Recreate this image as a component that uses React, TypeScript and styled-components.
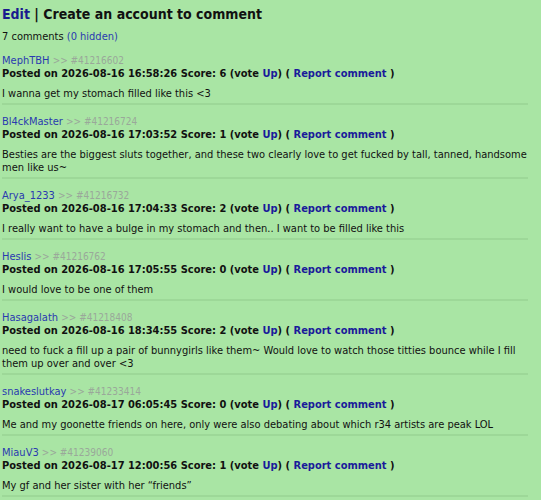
import React from "react";
import styled, { createGlobalStyle } from "styled-components";

const Global = createGlobalStyle`
  html, body { margin: 0; padding: 0; background: #a9e5a4; }
  body { font-family: "DejaVu Sans Condensed", "DejaVu Sans", sans-serif; font-stretch: condensed; color: #111; }
`;

const Page = styled.div`
  padding: 4px 13px 0 2px;
`;

const Heading = styled.h2`
  margin: 0;
  font-size: 14px;
  line-height: 20px;
  font-weight: bold;
  color: #111;
`;

const HeadLink = styled.a`
  color: #1a1a8e;
  text-decoration: none;
`;

const Count = styled.div`
  margin-top: 6px;
  font-size: 11px;
  line-height: 13px;
`;

const Hidden = styled.a`
  color: #2a3ab0;
  text-decoration: none;
`;

const List = styled.div`
  margin-top: 12px;
`;

const Comment = styled.div`
  padding-bottom: 3px;
  border-bottom: 2px solid #9dd898;
  & + & {
    padding-top: 11px;
  }
`;

const Header = styled.div`
  font-size: 11px;
  line-height: 12px;
`;

const User = styled.a`
  color: #2a3ab0;
  text-decoration: none;
`;

const Ref = styled.span`
  color: #9aa89a;
  font-size: 10px;
`;

const Posted = styled.div`
  font-size: 11px;
  line-height: 13px;
  font-weight: bold;
`;

const Link = styled.a`
  color: #1a1a9a;
  text-decoration: none;
`;

const Body = styled.div`
  margin-top: 7px;
  font-size: 11px;
  line-height: 13px;
`;

type C = { user: string; id: string; date: string; score: number; text: string };

const comments: C[] = [
  { user: "MephTBH", id: "41216602", date: "2026-08-16 16:58:26", score: 6, text: "I wanna get my stomach filled like this <3" },
  { user: "Bl4ckMaster", id: "41216724", date: "2026-08-16 17:03:52", score: 1, text: "Besties are the biggest sluts together, and these two clearly love to get fucked by tall, tanned, handsome men like us~" },
  { user: "Arya_1233", id: "41216732", date: "2026-08-16 17:04:33", score: 2, text: "I really want to have a bulge in my stomach and then.. I want to be filled like this" },
  { user: "Heslis", id: "41216762", date: "2026-08-16 17:05:55", score: 0, text: "I would love to be one of them" },
  { user: "Hasagalath", id: "41218408", date: "2026-08-16 18:34:55", score: 2, text: "need to fuck a fill up a pair of bunnygirls like them~ Would love to watch those titties bounce while I fill them up over and over <3" },
  { user: "snakeslutkay", id: "41233414", date: "2026-08-17 06:05:45", score: 0, text: "Me and my goonette friends on here, only were also debating about which r34 artists are peak LOL" },
  { user: "MiauV3", id: "41239060", date: "2026-08-17 12:00:56", score: 1, text: "My gf and her sister with her \u201cfriends\u201d" },
];

export default function App() {
  return (
    <Page>
      <Global />
      <Heading>
        <HeadLink href="#">Edit</HeadLink> | Create an account to comment
      </Heading>
      <Count>
        7 comments <Hidden href="#">(0 hidden)</Hidden>
      </Count>
      <List>
        {comments.map((c) => (
          <Comment key={c.id}>
            <Header>
              <User href="#">{c.user}</User> <Ref>&gt;&gt; #{c.id}</Ref>
            </Header>
            <Posted>
              Posted on {c.date} Score: {c.score} (vote <Link href="#">Up</Link>) ({" "}
              <Link href="#">Report comment</Link> )
            </Posted>
            <Body>{c.text}</Body>
          </Comment>
        ))}
      </List>
    </Page>
  );
}
